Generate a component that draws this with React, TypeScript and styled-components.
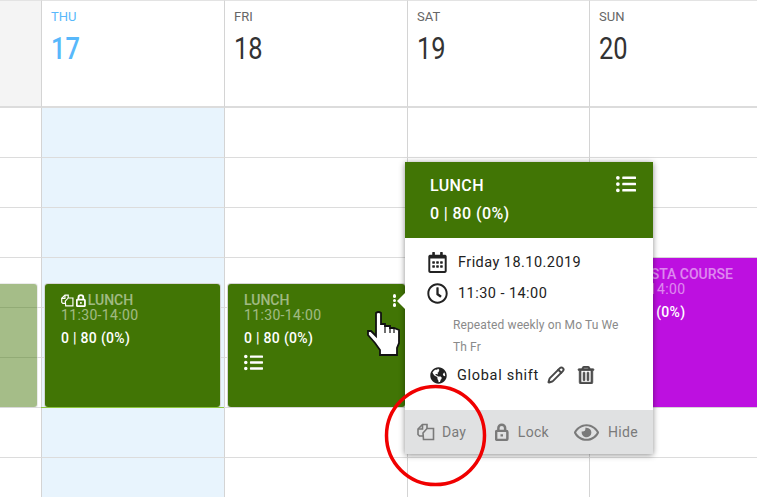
import React from 'react';
import styled, { createGlobalStyle } from 'styled-components';
import { FaListUl, FaRegCalendarAlt, FaRegClock, FaGlobeAmericas, FaRegTrashAlt, FaRegEye } from 'react-icons/fa';
import { LuPencil } from 'react-icons/lu';

const GlobalStyle = createGlobalStyle`
  html, body { margin: 0; padding: 0; background: #fff; }
  body { font-family: Roboto, "Liberation Sans", sans-serif; overflow: hidden; }
`;

const Page = styled.div`
  position: relative;
  width: 757px;
  height: 497px;
  overflow: hidden;
`;

const Calendar = styled.div`
  display: grid;
  grid-template-columns: 42px 183px 183px 182px 200px;
  width: 790px;
`;

const HeadCell = styled.div<{ $muted?: boolean }>`
  height: 97px;
  border-top: 1px solid #e3e3e3;
  border-right: 1px solid #d4d4d4;
  border-bottom: 2px solid #dcdcdc;
  padding: 8px 0 0 9px;
  background: ${p => (p.$muted ? '#f4f4f4' : '#fff')};
`;

const DayName = styled.div<{ $today?: boolean }>`
  font-size: 13px;
  line-height: 15px;
  color: ${p => (p.$today ? '#58b8fb' : '#666')};
`;

const DayNumber = styled.div<{ $today?: boolean }>`
  font-size: 31px;
  font-weight: ${p => (p.$today ? 500 : 400)};
  line-height: 32px;
  margin-top: 9px;
  transform: scaleX(0.82);
  transform-origin: left center;
  color: ${p => (p.$today ? '#58b8fb' : '#333')};
`;

const Slot = styled.div<{ $today?: boolean }>`
  height: 49px;
  border-right: 1px solid #d4d4d4;
  border-bottom: 1px solid #dcdcdc;
  background: ${p => (p.$today ? '#e8f4fd' : '#fff')};
`;

const Shift = styled.div<{ $left: number; $top: number; $width: number; $height: number; $color: string; $faded?: boolean; $underline?: boolean }>`
  position: absolute;
  left: ${p => p.$left}px;
  top: ${p => p.$top}px;
  width: ${p => p.$width}px;
  height: ${p => p.$height}px;
  box-sizing: border-box;
  padding: 9px 0 0 16px;
  background: ${p => p.$color};
  opacity: ${p => (p.$faded ? 0.47 : 1)};
  border-radius: 3px;
  box-shadow: 0 0 0 1px #d6d6d6;
  color: #fff;
  &::after {
    content: '';
    display: ${p => (p.$underline ? 'block' : 'none')};
    position: absolute;
    left: -4px;
    right: -4px;
    bottom: -1px;
    height: 1px;
    background: #8dc63f;
  }
`;

const ShiftTitle = styled.div`
  display: flex;
  align-items: center;
  gap: 2px;
  font-size: 14px;
  line-height: 15px;
  font-weight: 500;
  height: 15px;
  white-space: nowrap;
`;

const Dim = styled.span`
  opacity: 0.5;
`;

const ShiftTime = styled.div`
  font-size: 14px;
  line-height: 15px;
  letter-spacing: 0.35px;
  opacity: 0.5;
  white-space: nowrap;
`;

const ShiftCount = styled.div`
  font-size: 14px;
  line-height: 16px;
  letter-spacing: 0.3px;
  font-weight: 500;
  margin-top: 7px;
  white-space: nowrap;
`;

const ShiftList = styled.div`
  margin-top: 7px;
  height: 16px;
  font-size: 19px;
  line-height: 16px;
  svg { display: block; }
`;

const Dots = styled.div`
  position: absolute;
  right: 9px;
  top: 10px;
  display: flex;
  flex-direction: column;
  gap: 1px;
  i { width: 3.5px; height: 3.5px; border-radius: 50%; background: #fff; display: block; }
`;

const Popover = styled.div`
  position: absolute;
  left: 405px;
  top: 162px;
  width: 248px;
  height: 292px;
  background: #fff;
  display: flex;
  flex-direction: column;
  box-shadow: 0 1px 6px rgba(0, 0, 0, 0.45);
  &::before {
    content: '';
    position: absolute;
    left: -8px;
    top: 131px;
    border: 8px solid transparent;
    border-left: 0;
    border-right-color: #fff;
  }
`;

const PopHeader = styled.div`
  position: relative;
  height: 76px;
  box-sizing: border-box;
  padding: 15px 25px 0;
  background: #417505;
  color: #fff;
  font-weight: 500;
  font-size: 16px;
  letter-spacing: 0.4px;
`;

const PopTitle = styled.div`
  line-height: 18px;
`;

const PopCount = styled.div`
  line-height: 18px;
  margin-top: 10px;
`;

const PopList = styled.div`
  position: absolute;
  right: 17px;
  top: 12px;
  font-size: 20px;
  line-height: 20px;
  svg { display: block; }
`;

const PopBody = styled.div`
  flex: 1;
  padding: 14px 0 0 22px;
`;

const InfoRow = styled.div`
  display: flex;
  align-items: center;
  gap: 10px;
  height: 20px;
  margin-bottom: 11px;
  font-size: 14.5px;
  letter-spacing: 0.45px;
  color: #222;
  svg { font-size: 21px; width: 21px; flex: none; }
`;

const Repeat = styled.div`
  width: 172px;
  margin: 2px 0 0 26px;
  font-size: 12px;
  line-height: 22px;
  letter-spacing: 0.12px;
  color: #8a8a8a;
`;

const GlobalRow = styled(InfoRow)`
  margin-top: 7px;
  letter-spacing: 0.7px;
  svg { font-size: 17px; width: 17px; margin-left: 3px; }
`;

const RowActions = styled.span`
  display: flex;
  align-items: center;
  gap: 12px;
  margin-left: -2px;
  color: #484848;
  svg { font-size: 18px; width: 18px; margin-left: 0; stroke-width: 2.6; }
`;

const Trash = styled(FaRegTrashAlt)`
  && { stroke-width: 22; }
`;

const PopFooter = styled.div`
  height: 44px;
  background: #e0e1e2;
  display: flex;
  align-items: center;
  padding: 0 15px 0 12px;
  justify-content: space-between;
  font-size: 14px;
  letter-spacing: 0.3px;
  color: #7a7a7a;
`;

const FooterItem = styled.div<{ $gap?: number; $trail?: number }>`
  display: flex;
  align-items: center;
  gap: ${p => p.$gap ?? 9}px;
  padding-right: ${p => p.$trail ?? 0}px;
`;

const Circle = styled.svg`
  position: absolute;
  left: 383px;
  top: 383px;
`;

const Cursor = styled.svg`
  position: absolute;
  left: 366px;
  top: 310px;
`;

const CopyIcon = ({ size = 18 }: { size?: number }) => (
  <svg width={size} height={size} viewBox="0 0 18 18" fill="none" stroke="currentColor" strokeWidth="1.6">
    <path d="M6.5 13H2.5L1 11.5V6L5.5 1.5H10V5.5" />
    <path d="M6 10L10 5.5H16.5V16.5H6.5Z" />
    <path d="M5.5 1.5V6H1" />
  </svg>
);

const LockIcon = ({ size = 18 }: { size?: number }) => (
  <svg width={size * 0.75} height={size} viewBox="0 0 12 16" fill="none" stroke="currentColor" strokeWidth="2.2">
    <path d="M3 7V4.5a3 3 0 0 1 6 0V7" />
    <rect x="1" y="7" width="10" height="8" rx="1" />
    <path d="M6 10v2" />
  </svg>
);

const columns = 5;
const rows = 8;

const App: React.FC = () => (
  <Page>
    <GlobalStyle />
    <Calendar>
      <HeadCell $muted />
      <HeadCell>
        <DayName $today>THU</DayName>
        <DayNumber $today>17</DayNumber>
      </HeadCell>
      <HeadCell>
        <DayName>FRI</DayName>
        <DayNumber>18</DayNumber>
      </HeadCell>
      <HeadCell>
        <DayName>SAT</DayName>
        <DayNumber>19</DayNumber>
      </HeadCell>
      <HeadCell>
        <DayName>SUN</DayName>
        <DayNumber>20</DayNumber>
      </HeadCell>
      {Array.from({ length: rows * columns }).map((_, i) => (
        <Slot key={i} $today={i % columns === 1} />
      ))}
    </Calendar>

    <Shift $left={-20} $top={284} $width={57} $height={123} $color="#417505" $faded />

    <Shift $left={45} $top={284} $width={175} $height={123} $color="#417505" $underline>
      <ShiftTitle>
        <CopyIcon size={13} />
        <LockIcon size={13} />
        <Dim>LUNCH</Dim>
      </ShiftTitle>
      <ShiftTime>11:30-14:00</ShiftTime>
      <ShiftCount>0 | 80 (0%)</ShiftCount>
    </Shift>

    <Shift $left={228} $top={284} $width={177} $height={123} $color="#417505">
      <ShiftTitle>
        <Dim>LUNCH</Dim>
      </ShiftTitle>
      <ShiftTime>11:30-14:00</ShiftTime>
      <ShiftCount>0 | 80 (0%)</ShiftCount>
      <ShiftList>
        <FaListUl />
      </ShiftList>
      <Dots>
        <i />
        <i />
        <i />
      </Dots>
    </Shift>

    <Shift $left={592} $top={258} $width={180} $height={149} $color="#bd10e0">
      <ShiftTitle>
        <LockIcon size={13} />
        <Dim>BARISTA COURSE</Dim>
      </ShiftTitle>
      <ShiftTime>11:30-14:00</ShiftTime>
      <ShiftCount>0 | 100 (0%)</ShiftCount>
    </Shift>

    <Popover>
      <PopHeader>
        <PopTitle>LUNCH</PopTitle>
        <PopCount>0 | 80 (0%)</PopCount>
        <PopList>
          <FaListUl />
        </PopList>
      </PopHeader>
      <PopBody>
        <InfoRow>
          <FaRegCalendarAlt />
          Friday 18.10.2019
        </InfoRow>
        <InfoRow>
          <FaRegClock />
          11:30 - 14:00
        </InfoRow>
        <Repeat>Repeated weekly on Mo Tu We Th Fr</Repeat>
        <GlobalRow>
          <FaGlobeAmericas />
          Global shift
          <RowActions>
            <LuPencil />
            <Trash />
          </RowActions>
        </GlobalRow>
      </PopBody>
      <PopFooter>
        <FooterItem $gap={7} $trail={4}>
          <CopyIcon />
          Day
        </FooterItem>
        <FooterItem>
          <LockIcon />
          Lock
        </FooterItem>
        <FooterItem>
          <FaRegEye size={25} />
          Hide
        </FooterItem>
      </PopFooter>
    </Popover>

    <Cursor width="36" height="47" viewBox="0 0 36 47">
      <path
        d="M10 3Q12.5 1 15 3V14H19V16H24V18H28L33 20V33L31 38V45H14V40L9 33L2 25V21H5L10 26Z"
        fill="#fff"
        stroke="#111"
        strokeWidth="1.8"
      />
      <path d="M19 15V23M24 17V23M28 18V23" stroke="#111" strokeWidth="1.2" fill="none" />
    </Cursor>

    <Circle width="106" height="106" viewBox="0 0 106 106" fill="none">
      <circle cx="52.5" cy="52.5" r="49" stroke="#f00000" strokeWidth="3.5" />
    </Circle>
  </Page>
);

export default App;
